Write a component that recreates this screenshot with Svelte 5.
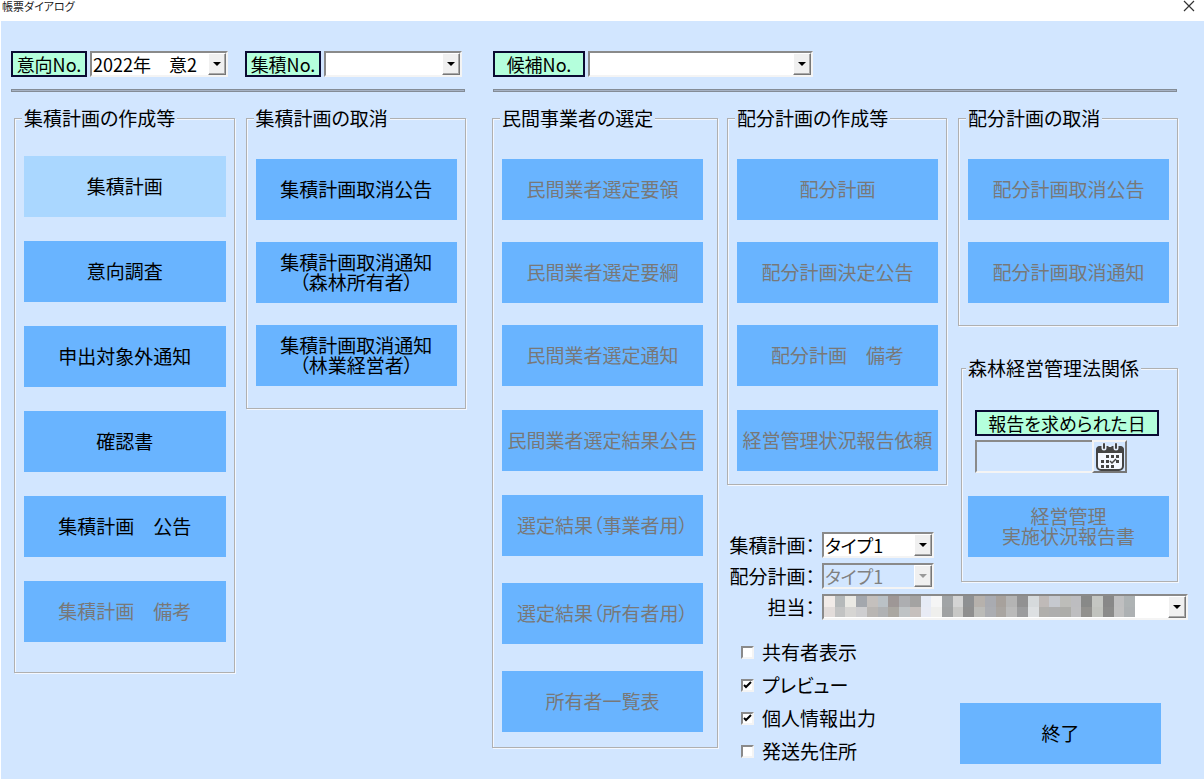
<script>
  let intentNo = $state('2022年　意2');
  let planNo = $state('');
  let candidateNo = $state('');
  let planType = $state('タイプ1');
  let allocType = $state('タイプ1');
  let staff = $state('');
  let reportDate = $state('');

  const planCreate = [
    { lines: ['集積計画'], active: true },
    { lines: ['意向調査'] },
    { lines: ['申出対象外通知'] },
    { lines: ['確認書'] },
    { lines: ['集積計画　公告'] },
    { lines: ['集積計画　備考'], disabled: true }
  ];

  const planCancel = [
    { lines: ['集積計画取消公告'] },
    { lines: ['集積計画取消通知', '（森林所有者）'] },
    { lines: ['集積計画取消通知', '（林業経営者）'] }
  ];

  const operatorSelect = [
    { lines: ['民間業者選定要領'], disabled: true },
    { lines: ['民間業者選定要綱'], disabled: true },
    { lines: ['民間業者選定通知'], disabled: true },
    { lines: ['民間業者選定結果公告'], disabled: true },
    { lines: ['選定結果（事業者用）'], disabled: true },
    { lines: ['選定結果（所有者用）'], disabled: true },
    { lines: ['所有者一覧表'], disabled: true }
  ];

  const allocCreate = [
    { lines: ['配分計画'], disabled: true },
    { lines: ['配分計画決定公告'], disabled: true },
    { lines: ['配分計画　備考'], disabled: true },
    { lines: ['経営管理状況報告依頼'], disabled: true }
  ];

  const allocCancel = [
    { lines: ['配分計画取消公告'], disabled: true },
    { lines: ['配分計画取消通知'], disabled: true }
  ];

  const options = $state([
    { label: '共有者表示', checked: false },
    { label: 'プレビュー', checked: true },
    { label: '個人情報出力', checked: true },
    { label: '発送先住所', checked: false }
  ]);

  // masked staff name, two rows of cells
  const mask = [
    'f1ebe8 b5b9ba eae9e4 a3a7ad c4c0bd bac1c6 9e9796 adaeb1 a4a3a2 e6ebf6 f5f5f5 a1a4a6 d4d4d4 8e9092 b6b1ac a9abb1 a7a19c b4b4b4 919192 d6dadc bfbab8 c6c9cf bdbdb9 bdbdc0 888988 c4c6c2 888888 bfbfc0 aeb3b4',
    'e2dcda c2c3c3 d6d5d3 ceced0 b9b6b3 b0b2b4 aaa7a1 bfc3c5 c6c0bd e8ebf5 efefed a0a2a3 c8c8c6 8f8f8f bbbbb8 abadb2 a9a5a1 bababa 9b9c9e dde0e2 b0afac aeaeae adada9 bebec0 92918e c1c3be 8b8b8a c0c0c0 adb1b3'
  ].map((row) => row.split(' '));
</script>

{#snippet actions(items)}
  {#each items as item}
    <button class="action" class:active={item.active} type="button" disabled={item.disabled}>
      {#each item.lines as line}
        <span>{line}</span>
      {/each}
    </button>
  {/each}
{/snippet}

{#snippet arrow()}
  <span class="arrow">
    <svg viewBox="0 0 8 4" width="8" height="4" aria-hidden="true"><path d="M0 0h8L4 4z" fill="currentColor" /></svg>
  </span>
{/snippet}

<div class="dialog">
  <header class="titlebar">
    <h1 class="title">帳票ダイアログ</h1>
    <button class="close" type="button" aria-label="閉じる">
      <svg viewBox="0 0 12 12" width="12" height="12"><path d="M1 1l10 10M11 1L1 11" stroke="#333" stroke-width="1.2" /></svg>
    </button>
  </header>

  <main class="body">
    <section class="left">
      <div class="filters">
        <div class="filter">
          <label class="tag" for="intent-no">意向No.</label>
          <span class="combo">
            <select id="intent-no" bind:value={intentNo}>
              <option>2022年　意2</option>
            </select>
            {@render arrow()}
          </span>
        </div>
        <div class="filter">
          <label class="tag" for="plan-no">集積No.</label>
          <span class="combo">
            <select id="plan-no" bind:value={planNo}><option value=""></option></select>
            {@render arrow()}
          </span>
        </div>
      </div>
      <hr class="rule" />
      <div class="left-groups">
        <fieldset class="group first">
          <legend>集積計画の作成等</legend>
          <div class="stack">{@render actions(planCreate)}</div>
        </fieldset>
        <fieldset class="group">
          <legend>集積計画の取消</legend>
          <div class="stack">{@render actions(planCancel)}</div>
        </fieldset>
      </div>
    </section>

    <section class="right">
      <div class="filters">
        <div class="filter wide">
          <label class="tag" for="candidate-no">候補No.</label>
          <span class="combo">
            <select id="candidate-no" bind:value={candidateNo}><option value=""></option></select>
            {@render arrow()}
          </span>
        </div>
      </div>
      <hr class="rule" />
      <div class="right-groups">
        <fieldset class="group operator">
          <legend>民間事業者の選定</legend>
          <div class="stack">{@render actions(operatorSelect)}</div>
        </fieldset>

        <div class="side">
          <div class="pair">
            <div class="column">
              <fieldset class="group alloc">
                <legend>配分計画の作成等</legend>
                <div class="stack">{@render actions(allocCreate)}</div>
              </fieldset>
              <div class="settings">
                <div class="setting">
                  <label for="plan-type">集積計画：</label>
                  <span class="combo">
                    <select id="plan-type" bind:value={planType}><option>タイプ1</option></select>
                    {@render arrow()}
                  </span>
                </div>
                <div class="setting">
                  <label for="alloc-type">配分計画：</label>
                  <span class="combo off">
                    <select id="alloc-type" bind:value={allocType} disabled><option>タイプ1</option></select>
                    {@render arrow()}
                  </span>
                </div>
              </div>
            </div>

            <div class="column">
              <fieldset class="group">
                <legend>配分計画の取消</legend>
                <div class="stack">{@render actions(allocCancel)}</div>
              </fieldset>
              <fieldset class="group law">
                <legend>森林経営管理法関係</legend>
                <div class="report">
                  <label class="tag" for="report-date">報告を求められた日</label>
                  <div class="date">
                    <input id="report-date" type="text" bind:value={reportDate} />
                    <button class="calendar" type="button" aria-label="カレンダー">
                      <svg viewBox="0 0 28 28" width="28" height="28">
                        <rect x="1" y="4" width="26" height="23" rx="4" fill="#f4f8ff" stroke="#444" stroke-width="2" />
                        <path d="M0 10V7a4 4 0 0 1 4-4h20a4 4 0 0 1 4 4v3z" fill="#444" />
                        <path d="M8 2v3M20 2v3" stroke="#e4eefa" stroke-width="5" stroke-linecap="round" />
                        <path d="M8 1v4M20 1v4" stroke="#444" stroke-width="2" stroke-linecap="round" />
                        <path d="M14 2v2" stroke="#e4eefa" stroke-width="3" />
                        <path d="M10 12h3v3h-3zM15 12h3v3h-3zM20 12h3v3h-3zM5 17h3v3H5zM10 17h3v3h-3zM20 17h3v3h-3zM5 22h3v3H5zM10 22h3v3h-3zM15 22h3v3h-3z" fill="#444" />
                        <path d="M14 18l2 2 4-4" fill="none" stroke="#444" stroke-width="1.5" />
                      </svg>
                    </button>
                  </div>
                </div>
                <button class="action" type="button" disabled>
                  <span>経営管理</span>
                  <span>実施状況報告書</span>
                </button>
              </fieldset>
            </div>
          </div>

          <div class="setting staff">
            <label for="staff">担当：</label>
            <span class="combo">
              <select id="staff" bind:value={staff}><option value=""></option></select>
              <svg class="mask" viewBox="0 0 29 2" preserveAspectRatio="none" shape-rendering="crispEdges" aria-hidden="true">
                {#each mask as row, y}
                  {#each row as color, x}
                    <rect {x} {y} width="1" height="1" fill={'#' + color} />
                  {/each}
                {/each}
              </svg>
              {@render arrow()}
            </span>
          </div>

          <div class="bottom">
            <div class="options">
              {#each options as option}
                <label class="option">
                  <input type="checkbox" bind:checked={option.checked} />
                  <span>{option.label}</span>
                </label>
              {/each}
            </div>
            <button class="action exit" type="button"><span>終了</span></button>
          </div>
        </div>
      </div>
    </section>
  </main>
</div>

<style>
  :global(body) {
    margin: 0;
    background: #fff;
  }

  .dialog {
    min-height: 100vh;
    display: flex;
    flex-direction: column;
    box-sizing: border-box;
    padding-left: 1px;
    font-family: "Noto Sans CJK JP", sans-serif;
    font-size: 19px;
    line-height: 22px;
    font-feature-settings: "palt";
    color: #000;
  }

  .dialog :is(button, input, select) {
    font: inherit;
    font-feature-settings: inherit;
    color: inherit;
    box-sizing: border-box;
    margin: 0;
    border-radius: 0;
  }

  .titlebar {
    height: 21px;
    display: flex;
    justify-content: space-between;
    align-items: flex-start;
    padding-right: 9px;
    background: #fff;
  }

  .title {
    margin: 0;
    padding-left: 1px;
    font-size: 11px;
    line-height: 13px;
    font-weight: 400;
    color: #222;
  }

  .close {
    display: flex;
    padding: 0;
    border: none;
    background: none;
  }

  .body {
    flex: 1;
    display: flex;
    align-items: flex-start;
    gap: 25px;
    padding: 30px 16px 0 10px;
    background: #d2e6ff;
  }

  .left {
    flex: 456 1 0;
    min-width: 0;
  }

  .right {
    flex: 696 1 0;
    min-width: 0;
  }

  .filters {
    display: flex;
    gap: 17px;
  }

  .filter {
    display: grid;
    grid-template-columns: 76px 138px;
    gap: 3px;
  }

  .filter.wide {
    grid-template-columns: 92px 225px;
    margin-left: 1px;
  }

  .tag {
    box-sizing: border-box;
    height: 26px;
    border: 2px solid #0a0a32;
    background: #b4ffdc;
    font-size: 18px;
    text-align: center;
    white-space: nowrap;
  }

  .combo {
    position: relative;
    display: block;
    height: 26px;
    font-size: 18px;
  }

  .combo select {
    display: block;
    width: 100%;
    height: 26px;
    padding: 0 18px 0 1px;
    border: 2px solid;
    border-color: #8a8a8a #f4f4f4 #f4f4f4 #8a8a8a;
    background: #fff;
    appearance: none;
    outline: none;
  }

  .combo.off select {
    background: #d2e6ff;
    color: #808080;
    opacity: 1;
  }

  .arrow {
    position: absolute;
    top: 2px;
    right: 2px;
    bottom: 2px;
    width: 18px;
    box-sizing: border-box;
    display: flex;
    align-items: center;
    justify-content: center;
    border: 1px solid;
    border-color: #fff #777 #777 #fff;
    box-shadow: inset -1px -1px 0 #a8a8a8;
    background: #f0f0f0;
    pointer-events: none;
  }

  .off .arrow {
    color: #999;
  }

  .rule {
    height: 1px;
    margin: 12px 2px 15px 0;
    border: 1px solid #848c96;
    background: #a6b2c4;
  }

  .right .rule {
    margin-left: 1px;
    margin-right: 11px;
  }

  .left-groups {
    display: grid;
    grid-template-columns: 1fr 1fr;
    align-items: start;
    gap: 11px;
    padding: 0 1px 0 3px;
  }

  .right-groups {
    display: grid;
    grid-template-columns: 226fr 461fr;
    align-items: start;
    gap: 9px;
  }

  .group {
    min-width: 0;
    margin: 0;
    padding: 30px 8px 22px 9px;
    border: 1px solid #b0b0b0;
    box-shadow: 1px 1px 0 #f4f8ff, inset 1px 1px 0 #f4f8ff;
  }

  .group.first {
    padding-top: 27px;
    padding-bottom: 30px;
  }

  .group.operator {
    padding-right: 14px;
    padding-bottom: 15px;
  }

  .group.alloc {
    padding-bottom: 13px;
  }

  .group.law {
    margin: 31px 0 0 3px;
    padding: 31px 8px 24px 6px;
  }

  legend {
    margin-left: -2px;
    padding: 0 2px;
    background: #d2e6ff;
    white-space: nowrap;
  }

  .stack {
    display: flex;
    flex-direction: column;
    gap: 22px;
  }

  .first .stack {
    gap: 24px;
  }

  .alloc .action:nth-child(n + 4),
  .operator .action:nth-child(n + 4) {
    margin-top: 2px;
  }

  .operator .action:nth-child(n + 6) {
    margin-top: 5px;
  }

  .action {
    display: flex;
    flex-direction: column;
    align-items: center;
    justify-content: center;
    width: 100%;
    height: 61px;
    padding: 0 0 2px;
    border: none;
    background: #69b4ff;
    white-space: nowrap;
  }

  .dialog .action {
    line-height: 20px;
  }

  .dialog .action:disabled {
    color: #787878;
  }

  .action.active {
    background: #aad7ff;
  }

  .pair {
    display: grid;
    grid-template-columns: 1fr 1fr;
    gap: 11px;
    padding-right: 10px;
  }

  .settings {
    display: grid;
    gap: 5px;
    margin-top: 47px;
  }

  .setting {
    display: grid;
    grid-template-columns: 88px 112px;
    gap: 7px;
    align-items: center;
    text-align: right;
    white-space: nowrap;
  }

  .setting.staff {
    grid-template-columns: 88px 1fr;
    margin-top: 5px;
  }

  .mask {
    position: absolute;
    top: 2px;
    left: 2px;
    width: 85%;
    height: 21px;
    pointer-events: none;
  }

  .report {
    margin: 0 10px 23px 7px;
  }

  .report .tag {
    display: block;
  }

  .date {
    display: flex;
    width: 152px;
    height: 33px;
    margin-top: 4px;
  }

  .date input {
    flex: 1;
    min-width: 0;
    padding: 0 2px;
    border: 2px solid;
    border-color: #8a8a8a #f4f4f4 #f4f4f4 #8a8a8a;
    border-right: none;
    background: #d2e6ff;
    outline: none;
  }

  .calendar {
    display: flex;
    align-items: center;
    justify-content: center;
    width: 35px;
    padding: 0;
    border: 2px solid;
    border-color: #f4f4f4 #777 #777 #f4f4f4;
    background: #d2e6ff;
  }

  .bottom {
    display: flex;
    justify-content: space-between;
    align-items: flex-end;
    padding: 21px 27px 0 14px;
  }

  .options {
    display: grid;
    gap: 11px;
    padding-bottom: 2px;
  }

  .option {
    display: flex;
    align-items: center;
    gap: 8px;
  }

  .option input {
    width: 13px;
    height: 13px;
    border: 2px solid;
    border-color: #8a8a8a #f4f4f4 #f4f4f4 #8a8a8a;
    background: #fff;
    appearance: none;
  }

  .option input:checked {
    background: #fff url("data:image/svg+xml,%3Csvg xmlns='http://www.w3.org/2000/svg' viewBox='0 0 9 9'%3E%3Cpath d='M1 4l2 2 5-5' fill='none' stroke='%23000' stroke-width='2'/%3E%3C/svg%3E") center / 9px 9px no-repeat;
  }

  .exit {
    width: 201px;
  }
</style>
